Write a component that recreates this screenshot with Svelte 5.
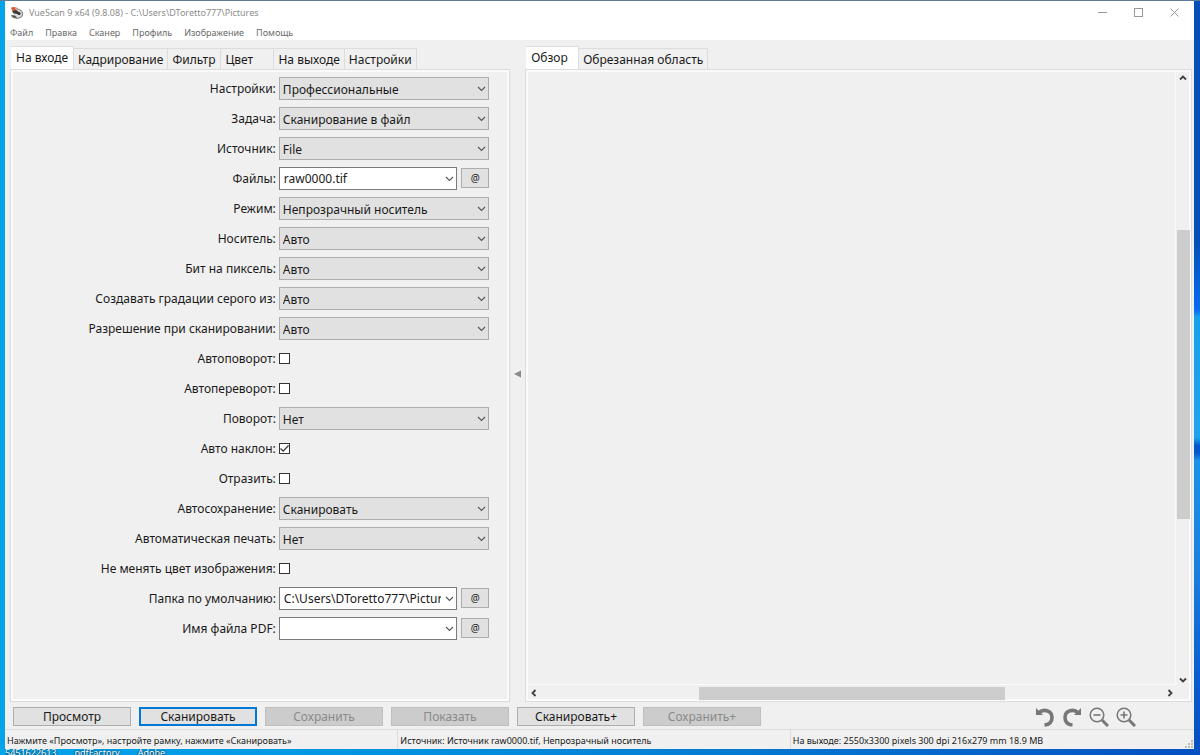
<script lang="ts">
  interface Field {
    id: string;
    label: string;
    kind: 'select' | 'combo' | 'check';
    value?: string;
    checked?: boolean;
  }

  const menus = ['Файл', 'Правка', 'Сканер', 'Профиль', 'Изображение', 'Помощь'];

  const inputTabs = ['На входе', 'Кадрирование', 'Фильтр', 'Цвет', 'На выходе', 'Настройки'];
  const previewTabs = ['Обзор', 'Обрезанная область'];

  let fields = $state<Field[]>([
    { id: 'options', label: 'Настройки:', kind: 'select', value: 'Профессиональные' },
    { id: 'task', label: 'Задача:', kind: 'select', value: 'Сканирование в файл' },
    { id: 'source', label: 'Источник:', kind: 'select', value: 'File' },
    { id: 'files', label: 'Файлы:', kind: 'combo', value: 'raw0000.tif' },
    { id: 'mode', label: 'Режим:', kind: 'select', value: 'Непрозрачный носитель' },
    { id: 'media', label: 'Носитель:', kind: 'select', value: 'Авто' },
    { id: 'bits', label: 'Бит на пиксель:', kind: 'select', value: 'Авто' },
    { id: 'gray', label: 'Создавать градации серого из:', kind: 'select', value: 'Авто' },
    { id: 'resolution', label: 'Разрешение при сканировании:', kind: 'select', value: 'Авто' },
    { id: 'autorotate', label: 'Автоповорот:', kind: 'check', checked: false },
    { id: 'autoflip', label: 'Автопереворот:', kind: 'check', checked: false },
    { id: 'rotation', label: 'Поворот:', kind: 'select', value: 'Нет' },
    { id: 'autoskew', label: 'Авто наклон:', kind: 'check', checked: true },
    { id: 'mirror', label: 'Отразить:', kind: 'check', checked: false },
    { id: 'autosave', label: 'Автосохранение:', kind: 'select', value: 'Сканировать' },
    { id: 'autoprint', label: 'Автоматическая печать:', kind: 'select', value: 'Нет' },
    { id: 'lockcolor', label: 'Не менять цвет изображения:', kind: 'check', checked: false },
    { id: 'folder', label: 'Папка по умолчанию:', kind: 'combo', value: 'C:\\Users\\DToretto777\\Pictures' },
    { id: 'pdfname', label: 'Имя файла PDF:', kind: 'combo', value: '' }
  ]);

  const actions = [
    { label: 'Просмотр' },
    { label: 'Сканировать', primary: true },
    { label: 'Сохранить', disabled: true },
    { label: 'Показать', disabled: true },
    { label: 'Сканировать+' },
    { label: 'Сохранить+', disabled: true }
  ];

  const status = [
    'Нажмите «Просмотр», настройте рамку, нажмите «Сканировать»',
    'Источник: Источник raw0000.tif, Непрозрачный носитель',
    'На выходе: 2550x3300 pixels 300 dpi 216x279 mm 18.9 MB'
  ];

  const shortcuts = ['5451622613', 'pdfFactory', 'Adobe'];

  let inputTab = $state(0);
  let previewTab = $state(0);
</script>

{#snippet chevron()}
  <svg class="chevron" width="9" height="6" viewBox="0 0 9 6" aria-hidden="true">
    <path d="M1 1 L4.5 4.5 L8 1" fill="none" stroke="#555" stroke-width="1.1" />
  </svg>
{/snippet}

{#snippet arrow(d: string)}
  <svg width="8" height="8" viewBox="0 0 8 8" aria-hidden="true">
    <path {d} fill="none" stroke="#404040" stroke-width="1.8" />
  </svg>
{/snippet}

<div class="desktop">
  <div class="window">
    <header class="titlebar">
      <svg class="logo" width="14" height="14" viewBox="0 0 14 14" aria-hidden="true">
        <path d="M4 3 L9 3 L13 7 L12 10 L6 13 L3 11 Z" fill="#dedede" />
        <path d="M8 3 C11 4 13 6 12.5 9 C12 11 9 12.5 6 12.5" fill="none" stroke="#8a8a8a" stroke-width="1.2" />
        <path d="M1 1.5 L5 1 L6 4 L2.5 5.5 Z" fill="#d8543a" />
        <path d="M5 1 L8 2 L7.5 4 L6 4 Z" fill="#b9a27a" />
        <path d="M2 5.5 L6 4 L9 6 L8 8 L4 7.5 Z" fill="#3a3634" />
        <circle cx="9" cy="7.5" r="1.6" fill="#333" />
        <path d="M1 9 L5 9.5 L7 11.5 L5 12.5 L2 11 Z" fill="#5a5754" />
      </svg>
      <h1>VueScan 9 x64 (9.8.08) - C:\Users\DToretto777\Pictures</h1>
      <div class="winctl">
        <button aria-label="Свернуть">
          <svg width="9" height="9" viewBox="0 0 9 9"><path d="M0 4.5 H9" stroke="#999" /></svg>
        </button>
        <button aria-label="Развернуть">
          <svg width="9" height="9" viewBox="0 0 9 9"><rect x="0.5" y="0.5" width="8" height="8" fill="none" stroke="#999" /></svg>
        </button>
        <button aria-label="Закрыть">
          <svg width="9" height="9" viewBox="0 0 9 9"><path d="M0.5 0.5 L8.5 8.5 M8.5 0.5 L0.5 8.5" stroke="#999" /></svg>
        </button>
      </div>
    </header>

    <nav class="menubar">
      {#each menus as menu}
        <button>{menu}</button>
      {/each}
    </nav>

    <main>
      <section class="pane">
        <div class="tabs" role="tablist">
          {#each inputTabs as tab, i}
            <button role="tab" class:active={inputTab === i} aria-selected={inputTab === i} onclick={() => (inputTab = i)}>{tab}</button>
          {/each}
        </div>
        <div class="panel">
          <form class="form">
            {#each fields as field}
              <div class="row">
                <label for={field.id}>{field.label}</label>
                <div class="control">
                  {#if field.kind === 'select'}
                    <div class="box">
                      <select id={field.id} bind:value={field.value}>
                        <option>{field.value}</option>
                      </select>
                      {@render chevron()}
                    </div>
                  {:else if field.kind === 'combo'}
                    <div class="box">
                      <input id={field.id} type="text" bind:value={field.value} />
                      {@render chevron()}
                    </div>
                    <button type="button" class="at">@</button>
                  {:else}
                    <input id={field.id} type="checkbox" bind:checked={field.checked} />
                    {#if field.checked}
                      <svg class="tick" width="11" height="11" viewBox="0 0 11 11" aria-hidden="true">
                        <path d="M1.5 5.5 L4.2 8.2 L9.5 2.5" fill="none" stroke="#333" stroke-width="1.2" />
                      </svg>
                    {/if}
                  {/if}
                </div>
              </div>
            {/each}
          </form>
        </div>
      </section>

      <button class="splitter" aria-label="Скрыть панель">
        <svg width="7" height="8" viewBox="0 0 7 8"><path d="M7 0.5 V7.5 L0 4 Z" fill="#8a8a8a" /></svg>
      </button>

      <section class="pane">
        <div class="tabs" role="tablist">
          {#each previewTabs as tab, i}
            <button role="tab" class:active={previewTab === i} aria-selected={previewTab === i} onclick={() => (previewTab = i)}>{tab}</button>
          {/each}
        </div>
        <div class="panel preview">
          <div class="canvas"></div>
          <div class="vscroll">
            {@render arrow('M1 5.5 L4 2.5 L7 5.5')}
            <div class="track"><div class="thumb"></div></div>
            {@render arrow('M1 2.5 L4 5.5 L7 2.5')}
          </div>
          <div class="hscroll">
            {@render arrow('M5.5 1 L2.5 4 L5.5 7')}
            <div class="track"><div class="thumb"></div></div>
            {@render arrow('M2.5 1 L5.5 4 L2.5 7')}
          </div>
        </div>
      </section>
    </main>

    <div class="actions">
      {#each actions as action}
        <button class="action" class:primary={action.primary} disabled={action.disabled}>{action.label}</button>
      {/each}
      <div class="tools">
        <button aria-label="Повернуть влево">
          <svg width="20" height="20" viewBox="0 0 20 20">
            <path d="M4 5.5 C8 1.8 17 3 17 10.5 C17 15 14 17.6 9.5 18" fill="none" stroke="#777" stroke-width="3.6" />
            <path d="M1 1 V8 H8 Z" fill="#777" />
          </svg>
        </button>
        <button aria-label="Повернуть вправо">
          <svg width="20" height="20" viewBox="0 0 20 20">
            <path d="M16 5.5 C12 1.8 3 3 3 10.5 C3 15 6 17.6 10.5 18" fill="none" stroke="#777" stroke-width="3.6" />
            <path d="M19 1 V8 H12 Z" fill="#777" />
          </svg>
        </button>
        <button aria-label="Уменьшить">
          <svg width="20" height="20" viewBox="0 0 20 20">
            <circle cx="8" cy="8" r="6.8" fill="none" stroke="#777" stroke-width="1.5" />
            <path d="M4.5 8 H11.5" stroke="#777" stroke-width="1.6" />
            <path d="M13 13 L19 19" stroke="#777" stroke-width="3" />
          </svg>
        </button>
        <button aria-label="Увеличить">
          <svg width="20" height="20" viewBox="0 0 20 20">
            <circle cx="8" cy="8" r="6.8" fill="none" stroke="#777" stroke-width="1.5" />
            <path d="M4.5 8 H11.5 M8 4.5 V11.5" stroke="#777" stroke-width="1.6" />
            <path d="M13 13 L19 19" stroke="#777" stroke-width="3" />
          </svg>
        </button>
      </div>
    </div>

    <footer class="status">
      {#each status as text}
        <span>{text}</span>
      {/each}
      <svg class="grip" width="8" height="8" viewBox="0 0 8 8" aria-hidden="true">
        <path d="M6 0h2v2h-2z M3 3h2v2h-2z M6 3h2v2h-2z M0 6h2v2h-2z M3 6h2v2h-2z M6 6h2v2h-2z" fill="#bbb" />
      </svg>
    </footer>
  </div>

  <div class="shortcuts">
    {#each shortcuts as name}
      <span>{name}</span>
    {/each}
  </div>
</div>

<style>
  :global(body) {
    margin: 0;
    font-family: 'Noto Sans', 'Open Sans', sans-serif;
    font-size: 12px;
    color: #1a1a1a;
  }
  button,
  select,
  input {
    font: inherit;
    color: inherit;
    margin: 0;
    box-sizing: border-box;
  }
  button {
    padding: 0;
    border: 0;
    background: none;
  }
  svg {
    display: block;
    flex: none;
  }

  .desktop {
    display: flex;
    flex-direction: column;
    box-sizing: border-box;
    height: 100vh;
    padding: 1px 6px 0 5px;
    overflow: hidden;
    background:
      linear-gradient(#5f7a96, #5f7a96) top / 100% 1px no-repeat,
      linear-gradient(#0450b8 0, #0450b8 32%, #0a6af0 41%, #18a0ea 42%, #1ea4ec 58%, #0458cc 59%, #0458cc 60%, #1a92e8 61%, #1a80e0 75%, #0a5cd0 90%, #0850c0 100%) right / 6px 100% no-repeat,
      linear-gradient(90deg, #04a4ea, #0298e4 25%, #0580d4 55%, #0450c0);
  }

  .window {
    flex: 1;
    min-height: 0;
    display: flex;
    flex-direction: column;
    background: #f0f0f0;
  }

  .titlebar {
    display: flex;
    align-items: center;
    height: 23px;
    padding-left: 5px;
    gap: 5px;
    background: #fff;
  }
  .titlebar h1 {
    flex: 1;
    margin: 0;
    font-size: 9px;
    font-weight: 400;
    color: #8c8c8c;
  }
  .winctl {
    display: flex;
    padding-right: 2px;
  }
  .winctl button {
    display: grid;
    place-items: center;
    width: 36px;
    height: 23px;
  }

  .menubar {
    display: flex;
    gap: 12px;
    height: 16px;
    padding-left: 5px;
    background: #fff;
    font-size: 9px;
    line-height: 18px;
    color: #6a6a6a;
  }

  main {
    flex: 1;
    min-height: 0;
    display: grid;
    grid-template-columns: minmax(0, 3fr) 15px minmax(0, 4fr);
    padding: 6px 2px 0 5px;
  }
  .pane {
    display: flex;
    flex-direction: column;
    min-height: 0;
  }
  .tabs {
    display: flex;
    align-items: flex-end;
    height: 23px;
    padding-left: 1px;
  }
  .tabs button {
    min-width: 53px;
    height: 21px;
    padding: 1px 4px 0;
    line-height: 20px;
    white-space: nowrap;
    text-align: left;
    border: 1px solid #dcdcdc;
    border-left: 0;
    border-bottom: 0;
  }
  .tabs .active {
    height: 23px;
    padding: 0 5px;
    background: #fff;
  }
  .panel {
    flex: 1;
    min-height: 0;
    border: 1px solid #dcdcdc;
    box-shadow: inset 0 0 0 2px #fbfbfb;
    padding: 2px;
    overflow: hidden;
  }

  .form {
    padding: 1px 18px 0 0;
  }
  .row {
    display: grid;
    grid-template-columns: minmax(0, 5fr) minmax(0, 4fr);
    align-items: center;
    gap: 3px;
    height: 30px;
  }
  label {
    text-align: right;
    white-space: nowrap;
  }
  .control {
    display: flex;
    align-items: center;
    gap: 4px;
    position: relative;
  }
  .box {
    flex: 1;
    min-width: 0;
    position: relative;
  }
  .box select,
  .box input {
    display: block;
    width: 100%;
    height: 23px;
    border-radius: 0;
    outline: none;
  }
  .box select {
    appearance: none;
    padding: 2px 20px 0 3px;
    border: 1px solid #adadad;
    background: #e1e1e1;
  }
  .box input {
    padding: 0 15px 0 4px;
    border: 1px solid #7a7a7a;
    background: #fff;
  }
  .chevron {
    position: absolute;
    right: 3px;
    top: 9px;
    pointer-events: none;
  }
  .at {
    width: 28px;
    height: 20px;
    border: 1px solid #adadad;
    background: #e1e1e1;
    font-size: 10px;
    line-height: 18px;
  }
  input[type='checkbox'] {
    appearance: none;
    width: 11px;
    height: 11px;
    border: 1px solid #333;
    background: #fff;
  }
  .tick {
    position: absolute;
    left: 0;
    pointer-events: none;
  }

  .splitter {
    display: grid;
    place-items: center;
  }

  .preview {
    display: grid;
    grid-template-columns: minmax(0, 1fr) 15px;
    grid-template-rows: minmax(0, 1fr) 16px;
    padding: 2px 0 0 2px;
  }
  .canvas {
    border-right: 1px solid #fafafa;
    border-bottom: 1px solid #fafafa;
  }
  .vscroll,
  .hscroll {
    display: flex;
    align-items: center;
    justify-content: space-between;
  }
  .vscroll {
    flex-direction: column;
    padding: 2px 0 1px;
  }
  .hscroll {
    padding: 0 2px;
  }
  .track {
    flex: 1;
    display: flex;
  }
  .vscroll .track {
    flex-direction: column;
    width: 13px;
    padding: 5px 0;
  }
  .hscroll .track {
    height: 13px;
    padding: 0 5px;
  }
  .thumb {
    background: #cdcdcd;
  }
  .vscroll .thumb {
    height: 49.5%;
    margin-top: 143px;
  }
  .hscroll .thumb {
    width: 49.5%;
    margin-left: 25.3%;
  }

  .actions {
    display: flex;
    align-items: center;
    gap: 8px;
    height: 25px;
    padding: 2px 58px 0 8px;
    border-bottom: 1px solid #dcdcdc;
  }
  .action {
    width: 118px;
    height: 19px;
    border: 1px solid #adadad;
    background: #e1e1e1;
    line-height: 17px;
  }
  .action.primary {
    border: 2px solid #0078d7;
    line-height: 15px;
  }
  .action:disabled {
    border-color: #bfbfbf;
    background: #ccc;
    color: #8a8a8a;
  }
  .tools {
    display: flex;
    gap: 7px;
    margin-left: auto;
  }

  .status {
    display: flex;
    position: relative;
    height: 19px;
    font-size: 9px;
    line-height: 21px;
  }
  .status span {
    flex: 0 0 33%;
    box-sizing: border-box;
    padding-left: 2px;
    white-space: nowrap;
    overflow: hidden;
  }
  .status span + span {
    border-left: 1px solid #dcdcdc;
  }
  .grip {
    position: absolute;
    right: 1px;
    bottom: 1px;
  }

  .shortcuts {
    display: flex;
    gap: 18px;
    height: 6px;
    overflow: hidden;
    font-size: 9px;
    line-height: 8px;
    color: #fff;
    text-shadow: 0 0 2px #000;
  }
</style>
